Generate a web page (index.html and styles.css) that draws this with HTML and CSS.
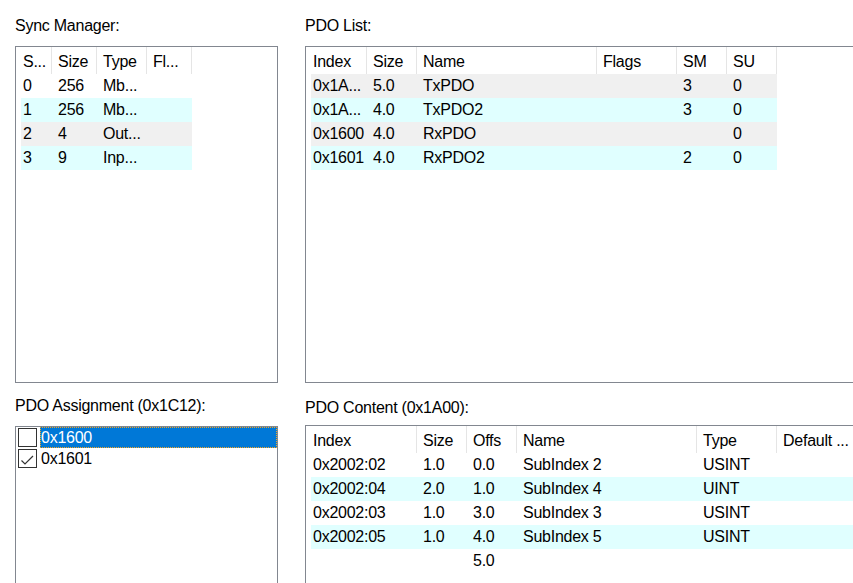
FILE: index.html
```html
<!DOCTYPE html>
<html>
<head>
<meta charset="utf-8">
<link rel="stylesheet" href="styles.css">
</head>
<body>
<div class="page">
  <section class="panel">
    <div class="label">Sync Manager:</div>
    <div class="box box-top">
      <div class="list">
        <div class="hrow">
          <div class="hc c-first w31">S...</div>
          <div class="hc w45">Size</div>
          <div class="hc w50">Type</div>
          <div class="hc w45">Fl...</div>
        </div>
        <div class="row">
          <div class="cell c-first w31">0</div><div class="cell w45">256</div><div class="cell w50">Mb...</div><div class="cell w45"></div>
        </div>
        <div class="row cyan">
          <div class="cell c-first w31">1</div><div class="cell w45">256</div><div class="cell w50">Mb...</div><div class="cell w45"></div>
        </div>
        <div class="row grey">
          <div class="cell c-first w31">2</div><div class="cell w45">4</div><div class="cell w50">Out...</div><div class="cell w45"></div>
        </div>
        <div class="row cyan">
          <div class="cell c-first w31">3</div><div class="cell w45">9</div><div class="cell w50">Inp...</div><div class="cell w45"></div>
        </div>
      </div>
    </div>
  </section>

  <section class="panel">
    <div class="label">PDO List:</div>
    <div class="box box-top box-open">
      <div class="list">
        <div class="hrow">
          <div class="hc c-first w56">Index</div>
          <div class="hc w50">Size</div>
          <div class="hc w180">Name</div>
          <div class="hc w80">Flags</div>
          <div class="hc w50">SM</div>
          <div class="hc w50">SU</div>
        </div>
        <div class="row grey">
          <div class="cell c-first w56">0x1A...</div><div class="cell w50">5.0</div><div class="cell w180">TxPDO</div><div class="cell w80"></div><div class="cell w50">3</div><div class="cell w50">0</div>
        </div>
        <div class="row cyan">
          <div class="cell c-first w56">0x1A...</div><div class="cell w50">4.0</div><div class="cell w180">TxPDO2</div><div class="cell w80"></div><div class="cell w50">3</div><div class="cell w50">0</div>
        </div>
        <div class="row grey">
          <div class="cell c-first w56">0x1600</div><div class="cell w50">4.0</div><div class="cell w180">RxPDO</div><div class="cell w80"></div><div class="cell w50"></div><div class="cell w50">0</div>
        </div>
        <div class="row cyan">
          <div class="cell c-first w56">0x1601</div><div class="cell w50">4.0</div><div class="cell w180">RxPDO2</div><div class="cell w80"></div><div class="cell w50">2</div><div class="cell w50">0</div>
        </div>
      </div>
    </div>
  </section>

  <section class="panel">
    <div class="label">PDO Assignment (0x1C12):</div>
    <div class="box box-bottom box-checks">
      <div class="check-row">
        <span class="checkbox"></span>
        <span class="check-label selected">0x1600</span>
      </div>
      <div class="check-row">
        <span class="checkbox">
          <svg width="17" height="17" viewBox="0 0 17 17"><path d="M2.5 10.5 L6 14 L14 6" fill="none" stroke="#333" stroke-width="1.2"/></svg>
        </span>
        <span class="check-label">0x1601</span>
      </div>
    </div>
  </section>

  <section class="panel">
    <div class="label label-content">PDO Content (0x1A00):</div>
    <div class="box box-bottom box-open">
      <div class="list">
        <div class="hrow">
          <div class="hc c-first w106">Index</div>
          <div class="hc w50">Size</div>
          <div class="hc w50">Offs</div>
          <div class="hc w180">Name</div>
          <div class="hc w80">Type</div>
          <div class="hc w80">Default ...</div>
        </div>
        <div class="row">
          <div class="cell c-first w106">0x2002:02</div><div class="cell w50">1.0</div><div class="cell w50">0.0</div><div class="cell w180">SubIndex 2</div><div class="cell w80">USINT</div><div class="cell w80"></div>
        </div>
        <div class="row cyan">
          <div class="cell c-first w106">0x2002:04</div><div class="cell w50">2.0</div><div class="cell w50">1.0</div><div class="cell w180">SubIndex 4</div><div class="cell w80">UINT</div><div class="cell w80"></div>
        </div>
        <div class="row">
          <div class="cell c-first w106">0x2002:03</div><div class="cell w50">1.0</div><div class="cell w50">3.0</div><div class="cell w180">SubIndex 3</div><div class="cell w80">USINT</div><div class="cell w80"></div>
        </div>
        <div class="row cyan">
          <div class="cell c-first w106">0x2002:05</div><div class="cell w50">1.0</div><div class="cell w50">4.0</div><div class="cell w180">SubIndex 5</div><div class="cell w80">USINT</div><div class="cell w80"></div>
        </div>
        <div class="row">
          <div class="cell c-first w106"></div><div class="cell w50"></div><div class="cell w50">5.0</div><div class="cell w180"></div><div class="cell w80"></div><div class="cell w80"></div>
        </div>
      </div>
    </div>
  </section>
</div>
</body>
</html>
```

FILE: styles.css
```css
html, body {
  margin: 0;
  padding: 0;
  background: #ffffff;
  overflow: hidden;
  width: 853px;
  height: 583px;
}

body {
  font-family: "Liberation Sans", Arial, sans-serif;
  font-size: 16px;
  letter-spacing: -0.25px;
  color: #000000;
}

.page {
  box-sizing: border-box;
  width: 853px;
  height: 583px;
  overflow: hidden;
  display: grid;
  grid-template-columns: 263px 575px;
  grid-template-rows: 366px 186px;
  column-gap: 0;
  row-gap: 14px;
  padding: 17px 0 0 15px;
}

.panel {
  display: flex;
  flex-direction: column;
  min-width: 0;
  min-height: 0;
}

.panel + .panel:nth-child(2),
.panel:nth-child(4) {
  margin-left: 27px;
}

.label {
  flex: none;
  height: 18px;
  line-height: 18px;
  margin-bottom: 11px;
  white-space: nowrap;
}

.label-content {
  margin-top: 2px;
  margin-bottom: 8px;
}

.box {
  box-sizing: border-box;
  border: 1px solid #828790;
  background: #ffffff;
  overflow: hidden;
}

.box-top {
  height: 337px;
}

.box-bottom {
  flex: 1;
  min-height: 0;
  border-bottom: none;
}

.box-open {
  border-right: none;
}

.list {
  padding-left: 5px;
}

.hrow,
.row {
  display: flex;
  width: max-content;
}

.hc,
.cell {
  box-sizing: border-box;
  flex: none;
  overflow: hidden;
  white-space: nowrap;
  padding-left: 6px;
}

.hc {
  height: 27px;
  line-height: 18px;
  padding-top: 6px;
  border-right: 1px solid #e5e5e5;
}

.cell {
  height: 24px;
  line-height: 24px;
}

.c-first {
  padding-left: 2px;
}

.row.cyan {
  background: #e0ffff;
}

.row.grey {
  background: #f0f0f0;
}

.w31 { width: 31px; }
.w45 { width: 45px; }
.w50 { width: 50px; }
.w56 { width: 56px; }
.w80 { width: 80px; }
.w106 { width: 106px; }
.w180 { width: 180px; }

.check-row {
  display: flex;
  align-items: flex-start;
  height: 21px;
  padding-left: 2px;
}

.checkbox {
  box-sizing: border-box;
  flex: none;
  width: 19px;
  height: 19px;
  margin-top: 1px;
  border: 1px solid #333333;
  background: #ffffff;
  display: flex;
}

.checkbox svg {
  display: block;
}

.check-label {
  flex: 1;
  box-sizing: border-box;
  height: 21px;
  line-height: 21px;
  margin-left: 3px;
  padding-left: 1px;
  white-space: nowrap;
}

.check-label.selected {
  background: #0078d7;
  color: #ffffff;
  outline: 1px dotted #f5a623;
  outline-offset: -1px;
}
```
